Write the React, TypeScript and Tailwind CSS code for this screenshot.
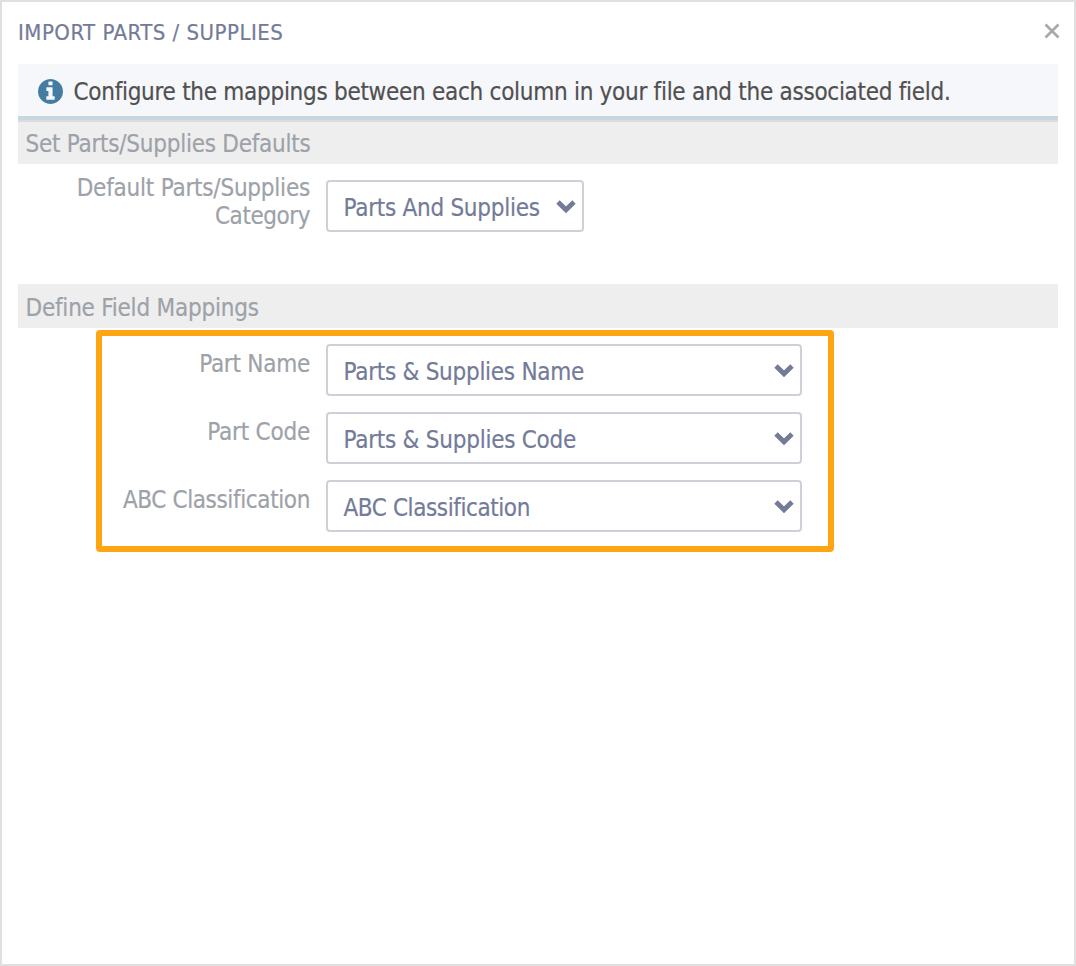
import type { ReactNode } from 'react'

type Mapping = {
  label: string
  value: string
  labelClass: string
  valueClass: string
}

const mappings: Mapping[] = [
  {
    label: 'Part Name',
    value: 'Parts & Supplies Name',
    labelClass: 'tracking-[-0.25px]',
    valueClass: 'tracking-[-0.27px]',
  },
  {
    label: 'Part Code',
    value: 'Parts & Supplies Code',
    labelClass: 'tracking-[-0.22px]',
    valueClass: 'tracking-[-0.25px]',
  },
  {
    label: 'ABC Classification',
    value: 'ABC Classification',
    labelClass: 'tracking-[-0.38px]',
    valueClass: 'tracking-[-0.42px]',
  },
]

function InfoIcon() {
  return (
    <svg viewBox="128 128 1536 1536" className="mt-0.5 mr-[11px] size-[25px] text-[#447ca3]" aria-hidden="true">
      <path
        fill="currentColor"
        d="M1152 1376v-160q0-14-9-23t-23-9h-96v-512q0-14-9-23t-23-9h-320q-14 0-23 9t-9 23v160q0 14 9 23t23 9h96v320h-96q-14 0-23 9t-9 23v160q0 14 9 23t23 9h448q14 0 23-9t9-23zm-128-896v-160q0-14-9-23t-23-9h-192q-14 0-23 9t-9 23v160q0 14 9 23t23 9h192q14 0 23-9t9-23zm640 416q0 209-103 385.5t-279.5 279.5-385.5 103-385.5-103-279.5-279.5-103-385.5 103-385.5 279.5-279.5 385.5-103 385.5 103 279.5 279.5 103 385.5z"
      />
    </svg>
  )
}

function SelectBox({ value, className }: { value: string; className: string }) {
  return (
    <button
      type="button"
      className={`flex h-[52px] items-center justify-between rounded-[4px] border-2 border-[#cdd0d7] bg-white pr-[6px] pl-[15.5px] text-left leading-7 whitespace-nowrap text-[#737b98] ${className}`}
    >
      <span className="pt-1">{value}</span>
      <svg className="mt-0.5" width="20" height="14" viewBox="0 0 20 14" fill="none" aria-hidden="true">
        <path d="M2 2 L10 9.8 L18 2" stroke="#737b98" strokeWidth="4.8" />
      </svg>
    </button>
  )
}

function SectionTitle({ children, className }: { children: ReactNode; className: string }) {
  return <h2 className={`bg-[#eeeeee] pl-[7.5px] leading-7 text-[#9da2a9] ${className}`}>{children}</h2>
}

export default function App() {
  return (
    <div className="h-[966px] w-[1076px] border-2 border-[#e0e0e0] bg-white px-4 font-['DejaVu_Sans_Condensed','DejaVu_Sans',sans-serif] text-[24px] [font-stretch:condensed] [-webkit-text-stroke:0.2px]">
      <header className="flex h-[62px] items-start justify-between pt-4">
        <h1 className="pt-px text-[22px] leading-7 tracking-[0.5px] text-[#737b98]">IMPORT PARTS / SUPPLIES</h1>
        <button type="button" aria-label="Close" className="-mr-0.5 pt-[5px]">
          <svg width="16" height="16" viewBox="0 0 16 16" fill="none">
            <path d="M1.5 1.5 L14.5 14.5 M14.5 1.5 L1.5 14.5" stroke="#a9a9a9" strokeWidth="2.7" />
          </svg>
        </button>
      </header>

      <div className="flex h-14 items-center border-b-4 border-[#cad6df] bg-[#f6f7fa] pl-[19.5px]">
        <InfoIcon />
        <p className="pt-1 leading-7 tracking-[-0.28px] whitespace-nowrap text-[#505050]">
          Configure the mappings between each column in your file and the associated field.
        </p>
      </div>

      <section>
        <SectionTitle className="h-11 border-t-2 border-[#dcdcdf] pt-[8px] tracking-[-0.25px]">
          Set Parts/Supplies Defaults
        </SectionTitle>
        <div className="flex h-[120px] items-start gap-4 pt-4">
          <label className="-mt-1.5 w-[292px] text-right leading-7 tracking-[-0.22px] text-[#9da2a9]">
            Default Parts/Supplies
            <br />
            <span className="tracking-[-0.45px]">Category</span>
          </label>
          <SelectBox value="Parts And Supplies" className="w-[258px] tracking-[-0.27px]" />
        </div>
      </section>

      <section>
        <SectionTitle className="h-11 pt-[10px] tracking-[-0.22px]">Define Field Mappings</SectionTitle>
        <div className="mt-0.5 ml-[78px] flex h-[222px] w-[738px] flex-col gap-4 rounded-[4px] border-[6px] border-[#ffa412] pt-2">
          {mappings.map((m) => (
            <div key={m.label} className="flex items-start gap-4">
              <label className={`w-[208px] pt-1.5 text-right leading-7 whitespace-nowrap text-[#9da2a9] ${m.labelClass}`}>
                {m.label}
              </label>
              <SelectBox value={m.value} className={`w-[476px] ${m.valueClass}`} />
            </div>
          ))}
        </div>
      </section>
    </div>
  )
}
